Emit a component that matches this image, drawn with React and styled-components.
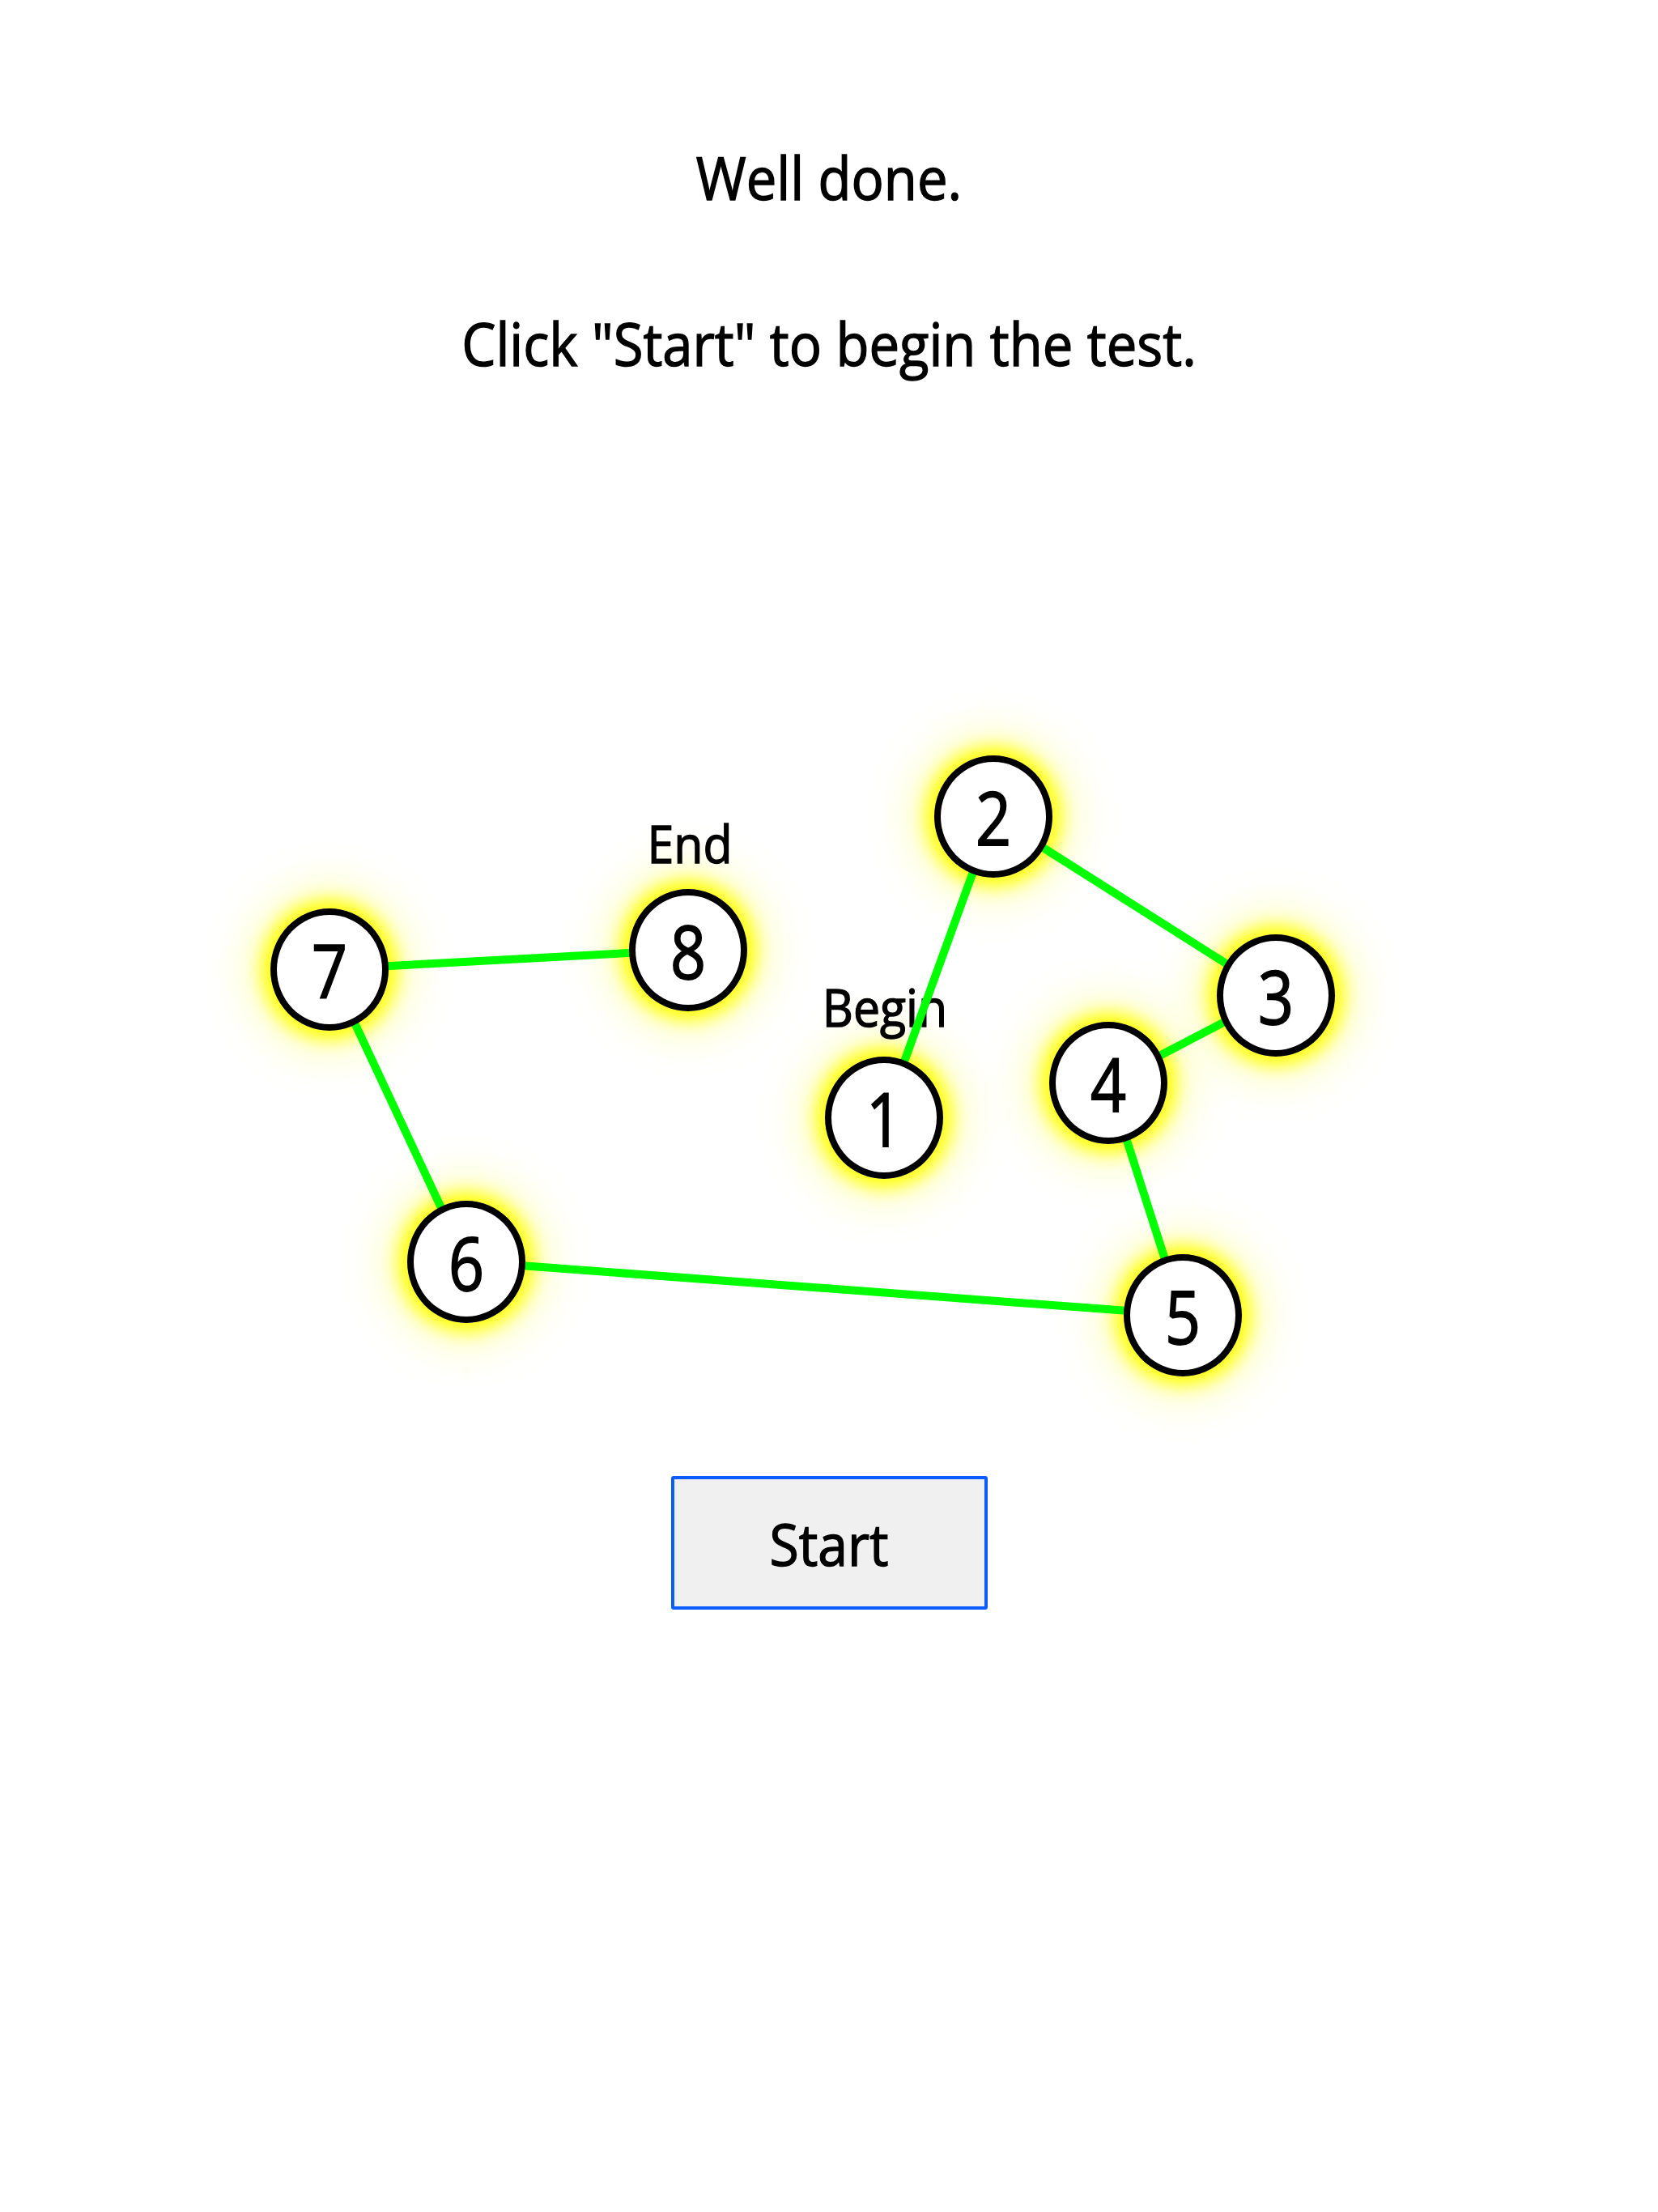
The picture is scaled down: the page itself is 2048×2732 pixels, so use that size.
import React from "react";
import styled, { createGlobalStyle } from "styled-components";

const nodes = [
  { n: 1, x: 1092, y: 500 },
  { n: 2, x: 1227, y: 128 },
  { n: 3, x: 1576, y: 349 },
  { n: 4, x: 1369, y: 457 },
  { n: 5, x: 1461, y: 744 },
  { n: 6, x: 576, y: 678 },
  { n: 7, x: 407, y: 317 },
  { n: 8, x: 850, y: 293 },
];

const labels = [
  { text: "End", x: 852, y: 132 },
  { text: "Begin", x: 1093, y: 334 },
];

const NODE_W = 146;
const NODE_H = 151;

const App = () => {
  const path = nodes.map((p) => `${p.x},${p.y}`).join(" ");

  return (
    <>
      <GlobalStyle />
      <Page>
        <Header>
          <Message>
            <Stretch>Well done.</Stretch>
          </Message>
          <Message>
            <Stretch>Click "Start" to begin the test.</Stretch>
          </Message>
        </Header>

        <Canvas>
          {labels.map((l) => (
            <Label key={l.text} style={{ left: l.x - 150, top: l.y }}>
              <Stretch>{l.text}</Stretch>
            </Label>
          ))}
          <Lines width="2048" height="900" viewBox="0 0 2048 900">
            <polyline
              points={path}
              fill="none"
              stroke="#00ff00"
              strokeWidth="10"
              strokeLinejoin="round"
            />
          </Lines>
          {nodes.map((p) => (
            <Node
              key={p.n}
              style={{ left: p.x - NODE_W / 2, top: p.y - NODE_H / 2 }}
            >
              <Digit>{p.n}</Digit>
            </Node>
          ))}
        </Canvas>

        <StartButton type="button">
          <Stretch>Start</Stretch>
        </StartButton>
      </Page>
    </>
  );
};

export default App;

const GlobalStyle = createGlobalStyle`
  html, body {
    margin: 0;
    padding: 0;
    background: #ffffff;
  }

  body {
    font-family: "Open Sans", "Noto Sans", sans-serif;
    color: #000000;
  }
`;

const Page = styled.div`
  display: flex;
  flex-direction: column;
  align-items: center;
  width: 2048px;
  min-height: 2732px;
`;

const Header = styled.div`
  display: flex;
  flex-direction: column;
  align-items: center;
  gap: 138px;
  padding-top: 186px;
`;

const Message = styled.div`
  font-size: 67px;
  line-height: 1;
  height: 67px;
  text-align: center;
  white-space: nowrap;
`;

const Stretch = styled.span`
  display: inline-block;
  transform: scaleY(1.09);
  -webkit-text-stroke: 1.3px #000000;
`;

const Canvas = styled.div`
  position: relative;
  z-index: 0;
  width: 2048px;
  height: 900px;
  margin-top: 422px;
`;

const Lines = styled.svg`
  position: absolute;
  left: 0;
  top: 0;
`;

const Label = styled.div`
  position: absolute;
  width: 300px;
  font-size: 59px;
  line-height: 1;
  text-align: center;
  white-space: nowrap;
`;

const Node = styled.div`
  position: absolute;
  box-sizing: border-box;
  width: ${NODE_W}px;
  height: ${NODE_H}px;
  border: 8px solid #000000;
  border-radius: 50%;
  background: #ffffff;
  display: flex;
  align-items: center;
  justify-content: center;

  &::before {
    content: "";
    position: absolute;
    inset: -8px;
    border-radius: 50%;
    z-index: -1;
    box-shadow: 0 0 22px 10px #ffff00, 0 0 56px 24px rgba(255, 255, 0, 0.3);
  }
`;

const Digit = styled.span`
  display: inline-block;
  font-size: 77px;
  line-height: 1;
  transform: scaleY(1.2);
  -webkit-text-stroke: 1.5px #000000;
`;

const StartButton = styled.button`
  box-sizing: border-box;
  width: 391px;
  height: 165px;
  margin-top: 43px;
  border: 4px solid #0b5cff;
  border-radius: 3px;
  background: #f0f0f0;
  color: #000000;
  font-family: "Open Sans", "Noto Sans", sans-serif;
  font-size: 66px;
  line-height: 1;
  padding: 0;
  cursor: pointer;
`;
